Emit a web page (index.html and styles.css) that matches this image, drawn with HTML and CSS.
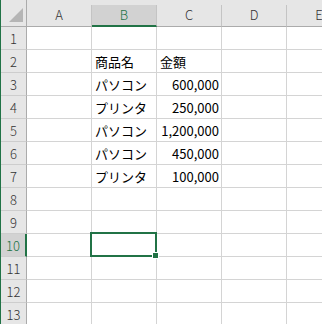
FILE: index.html
```html
<!DOCTYPE html>
<html lang="ja">
<head>
  <meta charset="UTF-8" />
  <meta name="viewport" content="width=device-width, initial-scale=1.0" />
  <title>Sheet1</title>
  <link rel="stylesheet" href="styles.css">
</head>
<body>
  <div class="window">
    <div class="sheet">
      <!-- column headers -->
      <div class="corner">
        <svg width="16" height="16" viewBox="0 0 16 16"><polygon points="15,1 15,15 1,15" fill="#b5b5b5"/></svg>
      </div>
      <div class="col-head">A</div>
      <div class="col-head active">B</div>
      <div class="col-head">C</div>
      <div class="col-head">D</div>
      <div class="col-head">E</div>

      <div class="row-head">1</div>
      <div class="cell"></div><div class="cell"></div><div class="cell"></div><div class="cell"></div><div class="cell"></div>

      <div class="row-head">2</div>
      <div class="cell"></div><div class="cell">商品名</div><div class="cell">金額</div><div class="cell"></div><div class="cell"></div>

      <div class="row-head">3</div>
      <div class="cell"></div><div class="cell">パソコン</div><div class="cell num">600,000</div><div class="cell"></div><div class="cell"></div>

      <div class="row-head">4</div>
      <div class="cell"></div><div class="cell">プリンタ</div><div class="cell num">250,000</div><div class="cell"></div><div class="cell"></div>

      <div class="row-head">5</div>
      <div class="cell"></div><div class="cell">パソコン</div><div class="cell num">1,200,000</div><div class="cell"></div><div class="cell"></div>

      <div class="row-head">6</div>
      <div class="cell"></div><div class="cell">パソコン</div><div class="cell num">450,000</div><div class="cell"></div><div class="cell"></div>

      <div class="row-head">7</div>
      <div class="cell"></div><div class="cell">プリンタ</div><div class="cell num">100,000</div><div class="cell"></div><div class="cell"></div>

      <div class="row-head">8</div>
      <div class="cell"></div><div class="cell"></div><div class="cell"></div><div class="cell"></div><div class="cell"></div>

      <div class="row-head">9</div>
      <div class="cell"></div><div class="cell"></div><div class="cell"></div><div class="cell"></div><div class="cell"></div>

      <div class="row-head active">10</div>
      <div class="cell"></div><div class="cell selected"><span class="handle"></span></div><div class="cell"></div><div class="cell"></div><div class="cell"></div>

      <div class="row-head">11</div>
      <div class="cell"></div><div class="cell"></div><div class="cell"></div><div class="cell"></div><div class="cell"></div>

      <div class="row-head">12</div>
      <div class="cell"></div><div class="cell"></div><div class="cell"></div><div class="cell"></div><div class="cell"></div>

      <div class="row-head">13</div>
      <div class="cell"></div><div class="cell"></div><div class="cell"></div><div class="cell"></div><div class="cell"></div>
    </div>
  </div>
</body>
</html>
```

FILE: styles.css
```css
body {
    margin: 0;
    background: #fff;
    font-family: "Noto Sans CJK JP", "Noto Sans", sans-serif;
    font-size: 13px;
    color: #000;
}
.window {
    width: 321px;
    height: 324px;
    border-left: 1px solid #217346;
    overflow: hidden;
}
.sheet {
    display: grid;
    grid-template-columns: 26px 65px 65px 65px 65px 65px;
    grid-template-rows: 27px repeat(13, 23px);
    width: 352px;
    background: #e6e6e6;
}
.sheet > div {
    box-sizing: border-box;
    display: flex;
    align-items: center;
    line-height: 1;
}
.corner {
    border-right: 1px solid #ababab;
    border-bottom: 1px solid #ababab;
    justify-content: flex-end;
    align-items: flex-end !important;
    padding: 0 2px 3px 0;
}
.col-head {
    margin-top: 5px;
    justify-content: center;
    background: #e6e6e6;
    border-right: 1px solid #c4c4c4;
    border-bottom: 1px solid #ababab;
    color: #333;
    font-weight: 300;
    padding-bottom: 2px;
}
.col-head.active {
    background: #d2d2d2;
    border-bottom: 2px solid #217346;
    color: #217346;
    padding-bottom: 1px;
}
.row-head {
    justify-content: center;
    background: #e6e6e6;
    border-right: 1px solid #ababab;
    border-bottom: 1px solid #cdcdcd;
    color: #333;
    font-weight: 300;
}
.row-head.active {
    background: #d2d2d2;
    border-right: 2px solid #217346;
    color: #217346;
}
.cell {
    background: #fff;
    border-right: 1px solid #d4d4d4;
    border-bottom: 1px solid #d4d4d4;
    padding: 1px 2px 0 3px;
    white-space: nowrap;
}
.cell.num {
    justify-content: flex-end;
}
.cell.selected {
    position: relative;
}
.cell.selected::after {
    content: "";
    position: absolute;
    top: -2px;
    left: -2px;
    right: -1px;
    bottom: -1px;
    border: 2px solid #217346;
}
.handle {
    position: absolute;
    right: -3px;
    bottom: -3px;
    width: 5px;
    height: 5px;
    background: #217346;
    border: 1px solid #fff;
    z-index: 1;
}
```
